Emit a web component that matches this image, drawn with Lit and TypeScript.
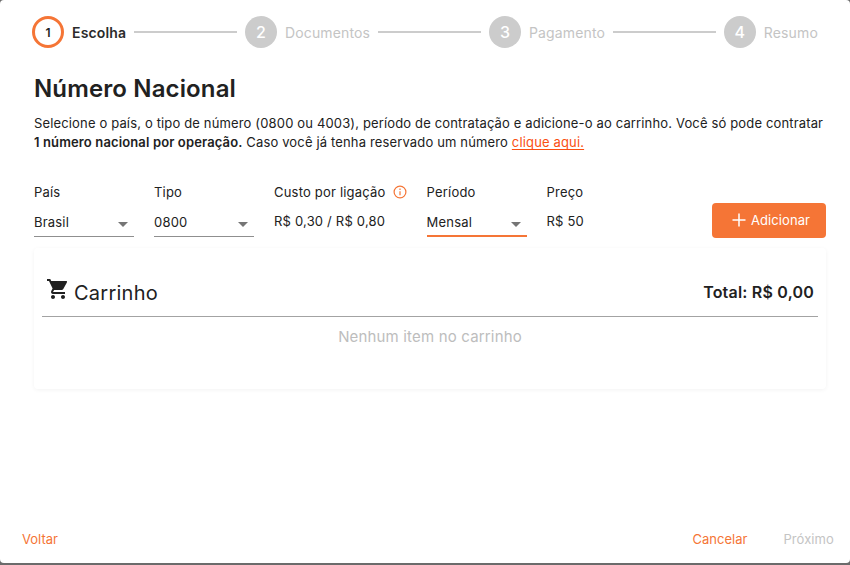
import { LitElement, html, css } from "lit";
import { customElement } from "lit/decorators.js";

const steps = ["Escolha", "Documentos", "Pagamento", "Resumo"];

@customElement("app-root")
export class AppRoot extends LitElement {
  static styles = css`
    :host {
      display: block;
      width: 850px;
      height: 565px;
      background: #6b6b6b;
      font-family: Inter, "Liberation Sans", sans-serif;
      color: #212121;
      overflow: hidden;
    }
    .dialog {
      box-sizing: border-box;
      width: 850px;
      height: 563px;
      background: #fff;
      border-radius: 4px;
      display: flex;
      flex-direction: column;
    }
    .stepper {
      display: flex;
      align-items: center;
      gap: 8px;
      padding: 16px 32px 0;
      height: 32px;
    }
    .circle {
      box-sizing: border-box;
      width: 32px;
      height: 32px;
      border-radius: 50%;
      background: #cccccc;
      color: #fff;
      display: flex;
      align-items: center;
      justify-content: center;
      font-size: 16px;
      font-weight: 500;
      flex: none;
    }
    .circle.active {
      background: #fff;
      border: 3px solid #f57536;
      color: #212121;
      font-size: 12px;
      font-weight: 600;
    }
    .step-label {
      font-size: 14px;
      letter-spacing: 0.15px;
      color: #c4c4c4;
      white-space: nowrap;
    }
    .step-label.active {
      color: #2b2b2b;
      font-weight: 600;
      letter-spacing: 0.15px;
    }
    .line {
      flex: 1;
      height: 2px;
      background: #cccccc;
    }
    .content {
      padding: 26px 24px 0 34px;
      flex: 1;
    }
    h1 {
      margin: 0;
      font-size: 24px;
      line-height: 30px;
      font-weight: 600;
      letter-spacing: 0.13px;
      color: #212121;
    }
    .desc {
      margin: 10px 0 0;
      font-size: 13px;
      line-height: 19px;
      letter-spacing: 0.15px;
      color: #212121;
      white-space: nowrap;
    }
    .desc b {
      font-weight: 600;
      letter-spacing: 0.13px;
    }
    .desc a {
      color: #fa4f12;
      text-decoration: underline;
      text-decoration-skip-ink: none;
      text-underline-offset: 2px;
    }
    .form {
      display: flex;
      margin-top: 30px;
      height: 57px;
    }
    .field {
      margin-right: 20px;
      font-size: 13px;
      letter-spacing: 0.2px;
      display: flex;
      flex-direction: column;
    }
    .label {
      line-height: 20px;
      color: #212121;
      display: flex;
      align-items: center;
      gap: 7px;
      white-space: nowrap;
    }
    .value {
      margin-top: 9px;
      line-height: 20px;
      color: #212121;
      white-space: nowrap;
    }
    .select {
      box-sizing: border-box;
      width: 100px;
      height: 35px;
      padding-top: 10px;
      border-bottom: 1px solid #8f8f8f;
      display: flex;
      justify-content: space-between;
      line-height: 20px;
      color: #212121;
    }
    .select.focus {
      border-bottom: 2px solid #f57536;
    }
    .caret {
      width: 24px;
      height: 24px;
      fill: #757575;
      flex: none;
      margin: 0 -1px 0 0;
    }
    .add {
      margin-left: auto;
      margin-top: 21px;
      box-sizing: border-box;
      width: 114px;
      height: 35px;
      border: 0;
      border-radius: 4px;
      background: #f57536;
      color: #fff;
      font: 400 13px Inter, "Liberation Sans", sans-serif;
      letter-spacing: 0.1px;
      display: flex;
      align-items: center;
      justify-content: center;
      gap: 3px;
      padding: 0 0 2px 2px;
    }
    .add svg {
      width: 18px;
      height: 18px;
      fill: #fff;
    }
    .card {
      box-sizing: border-box;
      margin-top: 9px;
      height: 141px;
      border-radius: 4px;
      padding: 0 8px;
      box-shadow: 0 1px 4px rgba(0, 0, 0, 0.05);
    }
    .card-head {
      height: 69px;
      box-sizing: border-box;
      border-bottom: 1px solid #a3a3a3;
      display: flex;
      justify-content: space-between;
      padding: 29px 4px 0;
    }
    .cart-title {
      display: flex;
      align-items: flex-start;
      font-size: 20px;
      line-height: 30px;
      letter-spacing: 0.25px;
      color: #212121;
      gap: 4px;
    }
    .cart-title svg {
      width: 24px;
      height: 24px;
      fill: #212121;
      flex: none;
    }
    .cart-title span {
      margin-top: 1px;
    }
    .total {
      font-size: 16px;
      line-height: 30px;
      font-weight: 600;
      letter-spacing: 0.2px;
      color: #212121;
    }
    .empty {
      text-align: center;
      font-size: 15px;
      letter-spacing: 0.17px;
      line-height: 20px;
      margin-top: 10px;
      color: #bdbdbd;
    }
    .footer {
      display: flex;
      justify-content: space-between;
      font-size: 13px;
      line-height: 20px;
      padding: 0 16px 14px 22px;
      color: #f57536;
    }
    .footer .right {
      display: flex;
      gap: 36px;
    }
    .disabled {
      color: #c4c4c4;
      letter-spacing: 0.1px;
    }
  `;

  private caret() {
    return html`<svg class="caret" viewBox="0 0 24 24"><path d="M7 10l5 5 5-5z" /></svg>`;
  }

  render() {
    return html`
      <div class="dialog">
        <div class="stepper">
          ${steps.map(
            (s, i) => html`
              ${i > 0 ? html`<div class="line"></div>` : ""}
              <div class="circle ${i === 0 ? "active" : ""}">${i + 1}</div>
              <div class="step-label ${i === 0 ? "active" : ""}">${s}</div>
            `
          )}
        </div>
        <div class="content">
          <h1>Número Nacional</h1>
          <p class="desc">
            Selecione o país, o tipo de número (0800 ou 4003), período de contratação e adicione-o ao carrinho. Você só pode contratar<br />
            <b>1 número nacional por operação.</b> Caso você já tenha reservado um número <a>clique aqui.</a>
          </p>
          <div class="form">
            <div class="field">
              <div class="label">País</div>
              <div class="select"><span>Brasil</span>${this.caret()}</div>
            </div>
            <div class="field">
              <div class="label">Tipo</div>
              <div class="select"><span>0800</span>${this.caret()}</div>
            </div>
            <div class="field">
              <div class="label">
                Custo por ligação
                <svg width="14" height="14" viewBox="0 0 14 14" fill="none" stroke="#f57536" stroke-width="1.2">
                  <circle cx="7" cy="7" r="5.9" />
                  <path d="M7 6.2v4" />
                  <path d="M7 3.6v1.4" />
                </svg>
              </div>
              <div class="value">R$ 0,30 / R$ 0,80</div>
            </div>
            <div class="field">
              <div class="label">Período</div>
              <div class="select focus"><span>Mensal</span>${this.caret()}</div>
            </div>
            <div class="field">
              <div class="label">Preço</div>
              <div class="value">R$ 50</div>
            </div>
            <button class="add">
              <svg viewBox="0 0 18 18"><path d="M8.25 2.5h1.5v5.75h5.75v1.5H9.75v5.75h-1.5V9.75H2.5v-1.5h5.75z" /></svg>
              Adicionar
            </button>
          </div>
          <div class="card">
            <div class="card-head">
              <div class="cart-title">
                <svg viewBox="0 0 24 24"><path d="M15.55 13c.75 0 1.41-.41 1.75-1.03l3.58-6.49A.996.996 0 0 0 20.01 4H5.21l-.94-2H1v2h2l3.6 7.59-1.35 2.44C4.52 15.37 5.48 17 7 17h12v-2H7l1.1-2h7.45zM7 18c-1.1 0-1.99.9-1.99 2S5.9 22 7 22s2-.9 2-2-.9-2-2-2zm10 0c-1.1 0-1.99.9-1.99 2s.89 2 1.99 2 2-.9 2-2-.9-2-2-2z" /></svg>
                <span>Carrinho</span>
              </div>
              <div class="total">Total: R$ 0,00</div>
            </div>
            <div class="empty">Nenhum item no carrinho</div>
          </div>
        </div>
        <div class="footer">
          <span>Voltar</span>
          <div class="right">
            <span>Cancelar</span>
            <span class="disabled">Próximo</span>
          </div>
        </div>
      </div>
    `;
  }
}
